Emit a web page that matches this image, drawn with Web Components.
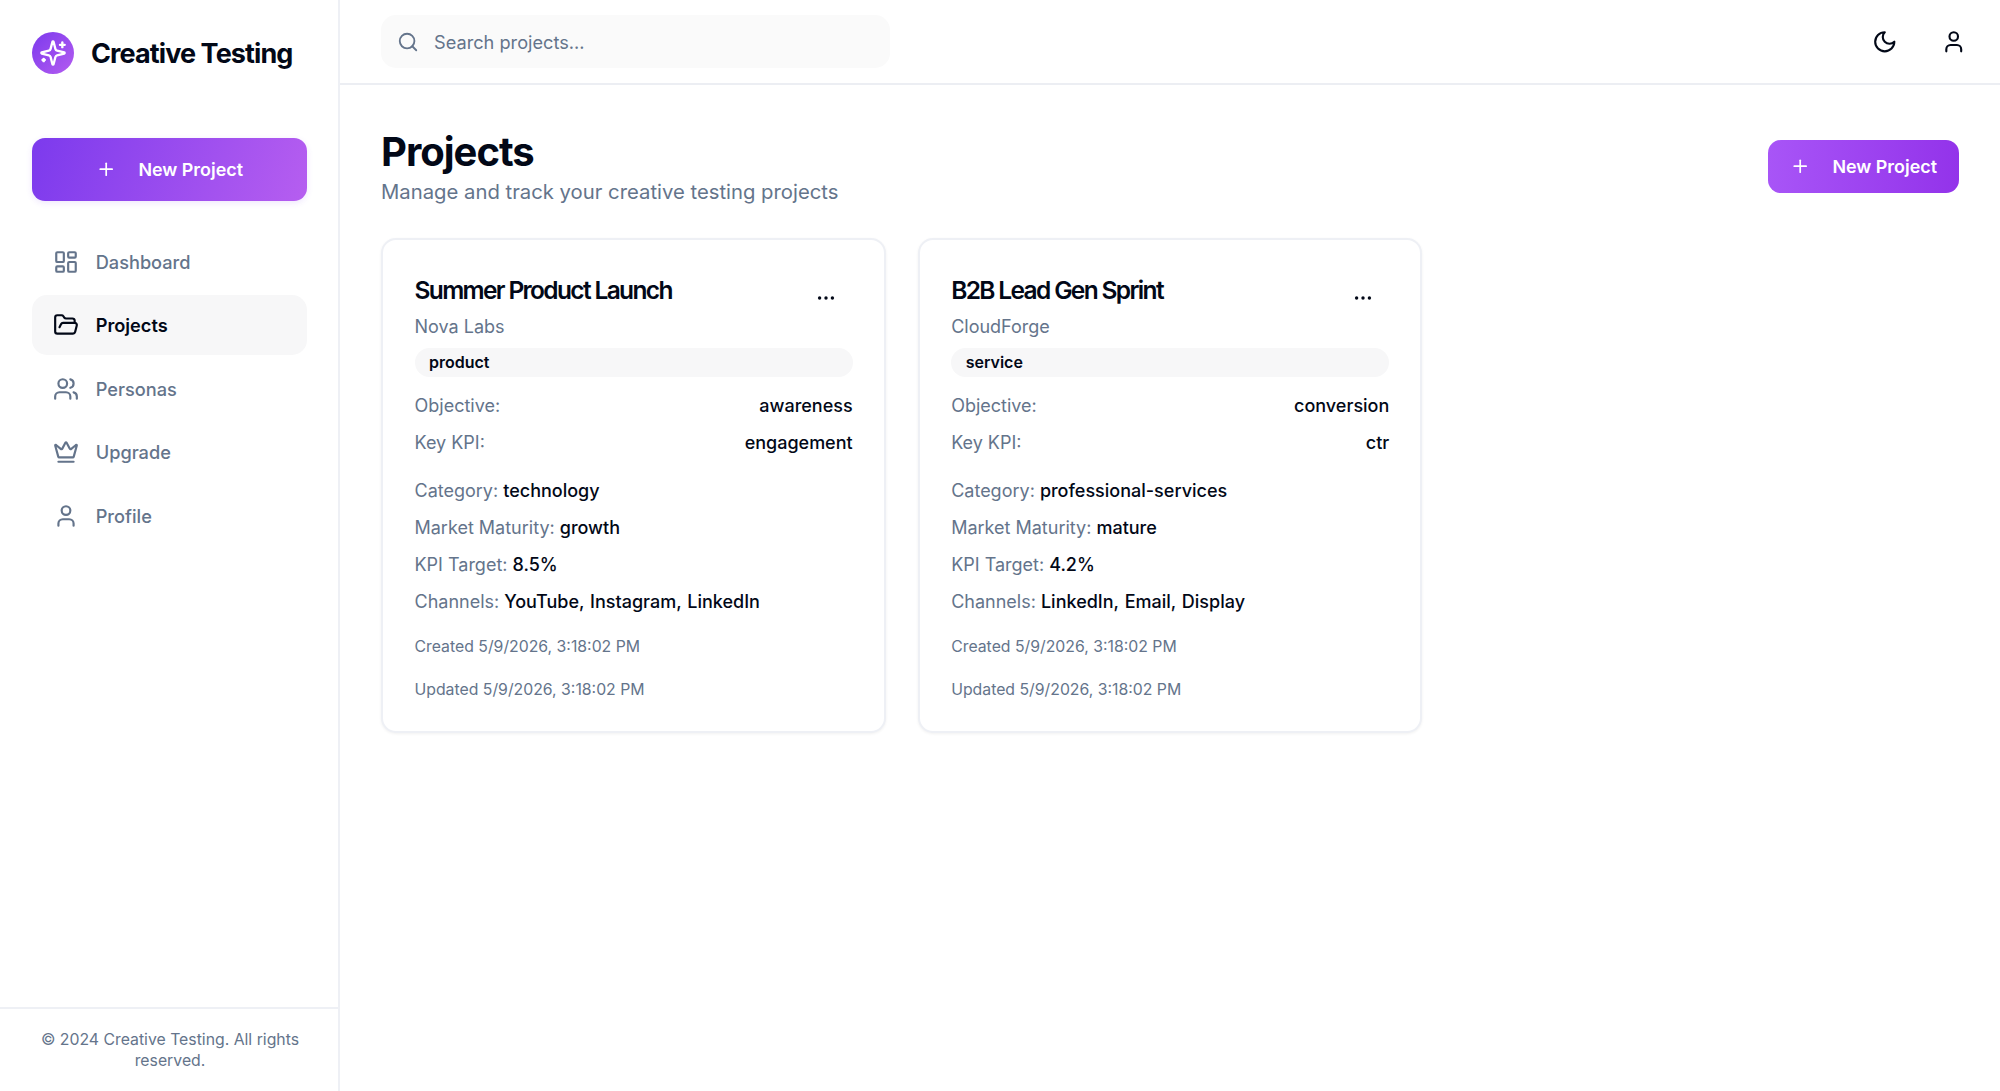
<!DOCTYPE html>
<html lang="en">
<head>
<meta charset="utf-8">
<title>Creative Testing</title>
<style>
  html, body { margin: 0; height: 100%; background: #fff; }
  body { font-family: Inter, "Liberation Sans", sans-serif; color: #020817; }
</style>
</head>
<body>
<app-shell>
  <side-bar slot="side">
    <nav-item icon="dashboard">Dashboard</nav-item>
    <nav-item icon="folder" active>Projects</nav-item>
    <nav-item icon="users">Personas</nav-item>
    <nav-item icon="crown">Upgrade</nav-item>
    <nav-item icon="user">Profile</nav-item>
  </side-bar>
  <top-bar slot="top"></top-bar>
  <page-head>
    <grad-button slot="action" variant="head">New Project</grad-button>
  </page-head>
  <card-grid>
    <project-card name="Summer Product Launch" client="Nova Labs" kind="product" objective="awareness" kpi="engagement"
      category="technology" maturity="growth" target="8.5%" channels="YouTube, Instagram, LinkedIn"
      created="5/9/2026, 3:18:02 PM" updated="5/9/2026, 3:18:02 PM"></project-card>
    <project-card name="B2B Lead Gen Sprint" client="CloudForge" kind="service" objective="conversion" kpi="ctr"
      category="professional-services" maturity="mature" target="4.2%" channels="LinkedIn, Email, Display"
      created="5/9/2026, 3:18:02 PM" updated="5/9/2026, 3:18:02 PM"></project-card>
  </card-grid>
</app-shell>

<script>
const ICONS = {
  sparkles: `<path d="M9.937 15.5A2 2 0 0 0 8.5 14.063l-6.135-1.582a.5.5 0 0 1 0-.962L8.5 9.936A2 2 0 0 0 9.937 8.5l1.582-6.135a.5.5 0 0 1 .963 0L14.063 8.5A2 2 0 0 0 15.5 9.937l6.135 1.581a.5.5 0 0 1 0 .964L15.5 14.063a2 2 0 0 0-1.437 1.437l-1.582 6.135a.5.5 0 0 1-.963 0z"/><path d="M20 3v4"/><path d="M22 5h-4"/><path d="M4 17v2"/><path d="M5 18H3"/>`,
  plus: `<path d="M5 12h14"/><path d="M12 5v14"/>`,
  dashboard: `<rect width="7" height="9" x="3" y="3" rx="1"/><rect width="7" height="5" x="14" y="3" rx="1"/><rect width="7" height="9" x="14" y="12" rx="1"/><rect width="7" height="5" x="3" y="16" rx="1"/>`,
  folder: `<path d="m6 14 1.5-2.9A2 2 0 0 1 9.24 10H20a2 2 0 0 1 1.94 2.5l-1.54 6a2 2 0 0 1-1.95 1.5H4a2 2 0 0 1-2-2V5a2 2 0 0 1 2-2h3.9a2 2 0 0 1 1.69.9l.81 1.2a2 2 0 0 0 1.67.9H18a2 2 0 0 1 2 2v2"/>`,
  users: `<path d="M16 21v-2a4 4 0 0 0-4-4H6a4 4 0 0 0-4 4v2"/><circle cx="9" cy="7" r="4"/><path d="M22 21v-2a4 4 0 0 0-3-3.87"/><path d="M16 3.13a4 4 0 0 1 0 7.75"/>`,
  crown: `<path d="M11.562 3.266a.5.5 0 0 1 .876 0L15.39 8.87a1 1 0 0 0 1.516.294L21.183 5.5a.5.5 0 0 1 .798.519l-2.834 10.246a1 1 0 0 1-.956.734H5.81a1 1 0 0 1-.957-.734L2.02 6.02a.5.5 0 0 1 .798-.519l4.276 3.664a1 1 0 0 0 1.516-.294z"/><path d="M5 21h14"/>`,
  user: `<path d="M19 21v-2a4 4 0 0 0-4-4H9a4 4 0 0 0-4 4v2"/><circle cx="12" cy="7" r="4"/>`,
  search: `<path d="m21 21-4.34-4.34"/><circle cx="11" cy="11" r="8"/>`,
  moon: `<path d="M12 3a6 6 0 0 0 9 9 9 9 0 1 1-9-9Z"/>`,
  more: `<circle cx="5.6" cy="12" r="1.7" fill="currentColor" stroke="none"/><circle cx="12" cy="12" r="1.7" fill="currentColor" stroke="none"/><circle cx="18.4" cy="12" r="1.7" fill="currentColor" stroke="none"/>`
};

class UiIcon extends HTMLElement {
  connectedCallback() {
    const size = this.getAttribute("size") || 25.5;
    this.attachShadow({ mode: "open" }).innerHTML = `
<style>
  :host { display: inline-flex; flex: none; }
  svg { display: block; }
</style>
<svg width="${size}" height="${size}" viewBox="0 0 24 24" fill="none" stroke="currentColor"
  stroke-width="2" stroke-linecap="round" stroke-linejoin="round">${ICONS[this.getAttribute("name")] || ""}</svg>`;
  }
}

class AppShell extends HTMLElement {
  constructor() {
    super();
    this.attachShadow({ mode: "open" }).innerHTML = `
<style>
  :host { display: grid; grid-template-columns: 340px 1fr; height: 1091px; overflow: hidden; }
  .main { display: flex; flex-direction: column; min-width: 0; }
  .content { padding: 41px 41px 0; display: flex; flex-direction: column; gap: 32px; }
</style>
<slot name="side"></slot>
<div class="main">
  <slot name="top"></slot>
  <div class="content"><slot></slot></div>
</div>`;
  }
}

class SideBar extends HTMLElement {
  constructor() {
    super();
    this.attachShadow({ mode: "open" }).innerHTML = `
<style>
  :host { display: flex; flex-direction: column; border-right: 2px solid #eef0f5; box-sizing: border-box; height: 1091px; }
  .brand { display: flex; align-items: center; gap: 17px; padding: 32px 31px 0 32px; height: 42px; }
  .logo { width: 42px; height: 42px; border-radius: 50%; color: #fff; display: flex; align-items: center; justify-content: center;
    background: linear-gradient(135deg, #7c3aed, #b45cf0); }
  .name { font-size: 27px; font-weight: 700; letter-spacing: -0.9px; white-space: nowrap; }
  .cta { padding: 64px 31px 0 32px; }
  nav { display: flex; flex-direction: column; gap: 3.5px; padding: 30.5px 31px 0 32px; flex: 1; }
  footer { border-top: 2px solid #eef0f5; padding: 20px 30px 0 32px; height: 84px; box-sizing: border-box;
    text-align: center; font-size: 15.8px; line-height: 21px; color: #64748b; }
</style>
<div class="brand">
  <div class="logo"><ui-icon name="sparkles" size="28"></ui-icon></div>
  <div class="name">Creative Testing</div>
</div>
<div class="cta"><grad-button variant="side">New Project</grad-button></div>
<nav><slot></slot></nav>
<footer>© 2024 Creative Testing. All rights reserved.</footer>`;
  }
}

class NavItem extends HTMLElement {
  connectedCallback() {
    this.attachShadow({ mode: "open" }).innerHTML = `
<style>
  :host { display: flex; align-items: center; gap: 16.7px; height: 60px; padding: 0 20px 0 21px; border-radius: 15px;
    font-size: 18.2px; font-weight: 500; color: #64748b; }
  :host([active]) { background: #f7f7f8; color: #020817; font-weight: 600; }
</style>
<ui-icon name="${this.getAttribute("icon")}" size="26"></ui-icon><span><slot></slot></span>`;
  }
}

class GradButton extends HTMLElement {
  constructor() {
    super();
    this.attachShadow({ mode: "open" }).innerHTML = `
<style>
  :host { display: flex; align-items: center; justify-content: center; gap: 22px; color: #fff;
    font-size: 17.9px; font-weight: 600; box-sizing: border-box; }
  :host([variant="side"]) { height: 63px; border-radius: 13px;
    background: linear-gradient(110deg, #7c3aed, #b65ef0);
    box-shadow: 0 2px 6px rgba(124, 58, 237, 0.12); }
  :host([variant="head"]) { height: 53px; width: 191px; border-radius: 13px;
    background: linear-gradient(90deg, #a855f7, #9333ea); }
</style>
<ui-icon name="plus" size="20.4"></ui-icon><span><slot></slot></span>`;
  }
}

class TopBar extends HTMLElement {
  constructor() {
    super();
    this.attachShadow({ mode: "open" }).innerHTML = `
<style>
  :host { display: flex; align-items: center; justify-content: space-between; height: 83px; box-sizing: content-box;
    border-bottom: 2px solid #eceef3; padding: 0 41px; }
  .search { display: flex; align-items: center; gap: 15px; width: 509px; height: 53px; box-sizing: border-box;
    padding: 0 16px; background: #fafafa; border-radius: 15px; color: #64748b; font-size: 18.2px; }
  .actions { display: flex; align-items: center; gap: 43px; color: #020817; margin-right: -7px; }
</style>
<div class="search"><ui-icon name="search" size="22"></ui-icon><span>Search projects...</span></div>
<div class="actions"><ui-icon name="moon"></ui-icon><ui-icon name="user"></ui-icon></div>`;
  }
}

class PageHead extends HTMLElement {
  constructor() {
    super();
    this.attachShadow({ mode: "open" }).innerHTML = `
<style>
  :host { display: flex; justify-content: space-between; align-items: flex-start; height: 77.5px; margin-top: 2.5px; }
  h1 { margin: 0; font-size: 40px; line-height: 46px; font-weight: 700; letter-spacing: -1px; }
  p { margin: 2.3px 0 0; font-size: 20.3px; line-height: 30px; color: #64748b; }
  .action { padding-top: 11.5px; }
</style>
<div><h1>Projects</h1><p>Manage and track your creative testing projects</p></div>
<div class="action"><slot name="action"></slot></div>`;
  }
}

class CardGrid extends HTMLElement {
  constructor() {
    super();
    this.attachShadow({ mode: "open" }).innerHTML = `
<style>
  :host { display: grid; grid-template-columns: repeat(3, 1fr); gap: 32px; }
</style>
<slot></slot>`;
  }
}

class ProjectCard extends HTMLElement {
  connectedCallback() {
    const a = (n) => this.getAttribute(n);
    this.attachShadow({ mode: "open" }).innerHTML = `
<style>
  :host { display: flex; flex-direction: column; box-sizing: border-box; height: 495px; padding: 29.7px 31px 0 31.5px;
    border: 2px solid #eef0f5; border-radius: 15px; background: #fff; box-shadow: 0 1px 3px rgba(2, 8, 23, 0.06);
    font-size: 18px; }
  .head { display: flex; justify-content: space-between; align-items: center; height: 40px; }
  h3 { margin: 0; font-size: 24.5px; font-weight: 600; letter-spacing: -1.65px; white-space: nowrap; }
  .more { margin: 16px 14.2px 0 0; color: #020817; }
  .client { color: #64748b; line-height: 30px; margin-top: 2px; }
  .tag { height: 29px; line-height: 29px; margin-top: 6px; padding: 0 14.5px; border-radius: 15px; background: #f7f7f8;
    font-size: 16px; font-weight: 600; }
  .row { display: flex; justify-content: space-between; height: 37px; align-items: center; }
  .rows { margin-top: 10.7px; margin-bottom: 11px; }
  .line { height: 37px; line-height: 37px; white-space: nowrap; color: #64748b; }
  b { font-weight: 500; color: #020817; word-spacing: 1px; }
  .stamp { color: #64748b; font-size: 15.8px; height: 42.5px; line-height: 42px; }
  .stamps { margin-top: 6px; }
</style>
<div class="head"><h3>${a("name")}</h3><ui-icon class="more" name="more" size="24"></ui-icon></div>
<div class="client">${a("client")}</div>
<div class="tag">${a("kind")}</div>
<div class="rows">
  <div class="row"><span class="line">Objective:</span><b>${a("objective")}</b></div>
  <div class="row"><span class="line">Key KPI:</span><b>${a("kpi")}</b></div>
</div>
<div class="line">Category: <b>${a("category")}</b></div>
<div class="line">Market Maturity: <b>${a("maturity")}</b></div>
<div class="line">KPI Target: <b>${a("target")}</b></div>
<div class="line">Channels: <b>${a("channels")}</b></div>
<div class="stamps">
  <div class="stamp">Created ${a("created")}</div>
  <div class="stamp">Updated ${a("updated")}</div>
</div>`;
  }
}

customElements.define("ui-icon", UiIcon);
customElements.define("grad-button", GradButton);
customElements.define("nav-item", NavItem);
customElements.define("side-bar", SideBar);
customElements.define("top-bar", TopBar);
customElements.define("page-head", PageHead);
customElements.define("card-grid", CardGrid);
customElements.define("project-card", ProjectCard);
customElements.define("app-shell", AppShell);
</script>
</body>
</html>
